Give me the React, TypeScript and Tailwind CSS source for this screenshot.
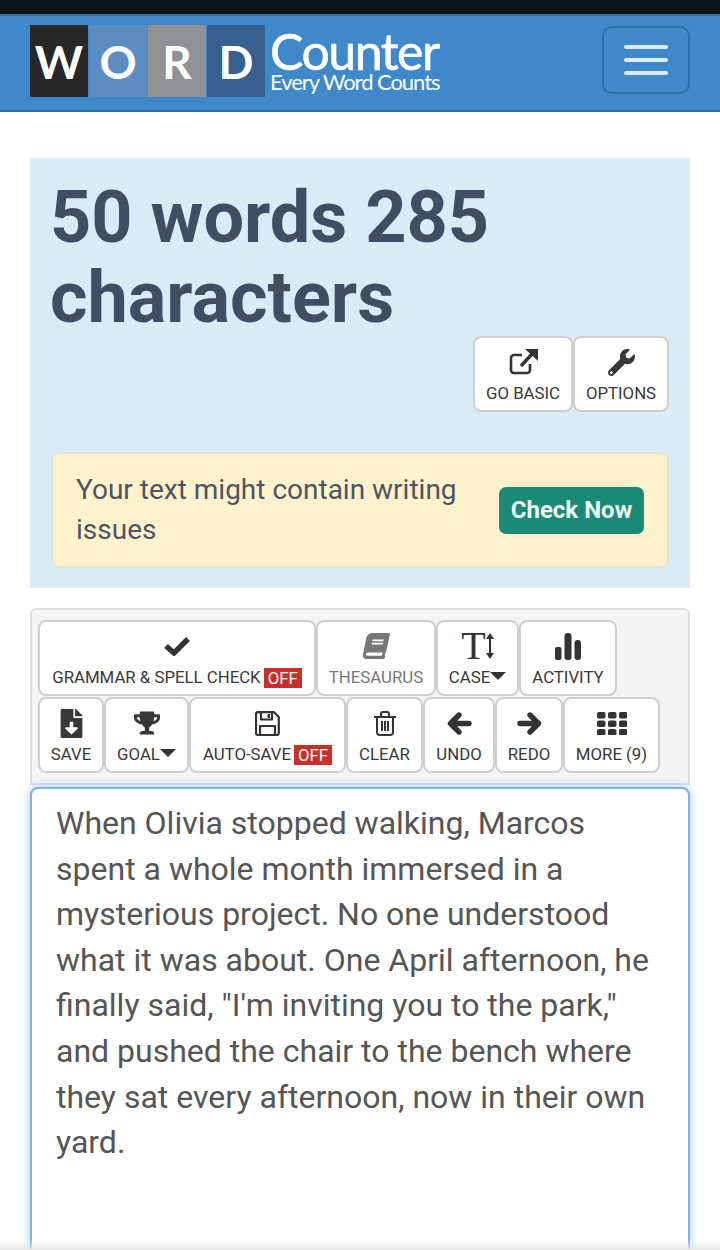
import React from "react";
import { FaBook, FaTrophy, FaWrench, FaFileDownload } from "react-icons/fa";

function Caret() {
  return <span className="inline-block w-0 h-0 border-x-[8px] border-x-transparent border-t-[8px] border-t-[#333] mb-[5px]" />;
}
function Off() {
  return <span className="ml-[3px] inline-block bg-[#c9302c] text-white px-[4px] h-[20px] leading-[20px]">OFF</span>;
}
function Btn({ w, icon, children, dim }: { w: string; icon: React.ReactNode; children: React.ReactNode; dim?: boolean }) {
  return (
    <div className={`${w} h-[76px] shrink-0 bg-white border-2 border-[#cfcfcf] rounded-[8px] flex flex-col items-center ${dim ? "text-[#777]" : "text-[#383838]"}`}>
      <div className="h-[40px] flex items-center justify-center pt-[8px]">{icon}</div>
      <div className="h-[30px] pt-[2px] flex items-center text-[16.8px] whitespace-nowrap">{children}</div>
    </div>
  );
}
function Tile({ bg, children }: { bg: string; children: string }) {
  return <div className={`${bg} w-[58px] h-[72px] flex items-center justify-center text-white text-[46px] font-bold font-['Lato',sans-serif]`}>{children}</div>;
}
const ExtLink = () => (
  <svg width="29" height="26" viewBox="0 0 29 26" fill="none" stroke="#333" strokeWidth="2.6">
    <path d="M21 15v6a3 3 0 0 1-3 3H5a3 3 0 0 1-3-3V9a3 3 0 0 1 3-3h8" />
    <path d="M12 17 L23 5" strokeWidth="3.4" />
    <path d="M16 0h13v12z" fill="#333" stroke="none" />
  </svg>
);
const Check = () => (
  <svg width="26" height="20" viewBox="0 0 26 20" fill="none" stroke="#333" strokeWidth="5.4"><path d="M2 10l8 7L24 3" /></svg>
);
const Arrow = ({ flip }: { flip?: boolean }) => (
  <svg width="25" height="23" viewBox="0 0 25 23" fill="none" stroke="#333" strokeWidth="5.4" strokeLinecap="round" strokeLinejoin="round" className={flip ? "-scale-x-100" : ""}>
    <path d="M12 3L3.5 11.5 12 20M4 11.5h18" />
  </svg>
);
const Grid = () => (
  <svg width="30" height="23" viewBox="0 0 30 23" fill="#333">
    {[0, 8.5, 17].map((y) => [0, 11, 22].map((x) => <rect key={`${x}-${y}`} x={x} y={y} width="8.5" height="6.5" rx="1.8" />))}
  </svg>
);
const Trash = () => (
  <svg width="22" height="25" viewBox="0 0 22 25" fill="none" stroke="#333" strokeWidth="2">
    <path d="M0 6h22M7 6V3a2 2 0 0 1 2-2h4a2 2 0 0 1 2 2v3M3 6v15a3 3 0 0 0 3 3h10a3 3 0 0 0 3-3V6M8 10v10M11 10v10M14 10v10" />
  </svg>
);
const Floppy = () => (
  <svg width="25" height="25" viewBox="0 0 25 25" fill="none" stroke="#333" strokeWidth="2.2" strokeLinejoin="round">
    <path d="M3 1.2h16l4.8 4.8v16a2 2 0 0 1-2 2H3a2 2 0 0 1-2-2V3a2 2 0 0 1 2-1.800z" />
    <path d="M6 1.500v7h11v-7M5 24v-9h15v9" />
    <rect x="12.500" y="3" width="2.500" height="4" fill="#333" stroke="none" />
  </svg>
);
const Bars = () => (
  <svg width="26" height="27" viewBox="0 0 26 27" fill="#333">
    <rect x="0" y="14" width="6.5" height="13" rx="2" /><rect x="9.5" y="0" width="7" height="27" rx="3" /><rect x="19.5" y="7" width="6.5" height="20" rx="3" />
  </svg>
);
const TextH = () => (
  <span className="flex items-center text-[#333]">
    <span className="font-['Liberation_Serif',serif] text-[40px] leading-none">T</span>
    <svg width="8" height="26" viewBox="0 0 8 26" fill="#333"><path d="M4 0l4 6H5v14h3l-4 6-4-6h3V6H0z" /></svg>
  </span>
);

export default function App() {
  return (
    <div className="relative w-[720px] h-[1250px] overflow-hidden bg-white font-['Roboto',sans-serif]">
      <div className="h-[14px] bg-[#0c131b]" />
      <header className="h-[98px] bg-[#3f89cb] border-y-2 border-t-[#3a6f9e] border-b-[#2f6a9c] flex items-start justify-between px-[30px] pt-[9px]">
        <div className="flex items-start gap-[1px]">
          <Tile bg="bg-[#272727]">W</Tile>
          <Tile bg="bg-[#5b8cc2]">O</Tile>
          <Tile bg="bg-[#8f9195]">R</Tile>
          <Tile bg="bg-[#35608f]">D</Tile>
          <div className="ml-[4px] mt-[6px] text-white font-['Lato',sans-serif] flex flex-col">
            <span className="text-[50px] leading-[40px] tracking-[-1.5px] h-[40px] [-webkit-text-stroke:0.6px_white]">Counter</span>
            <span className="text-[22px] leading-[22px] tracking-[-1.05px]">Every Word Counts</span>
          </div>
        </div>
        <div className="w-[88px] h-[68px] mt-[1px] border-2 border-[#2f6eaa] rounded-[10px] flex flex-col items-center justify-center gap-[9px]">
          <div className="w-[44px] h-[4px] rounded bg-[#dcecf7]" />
          <div className="w-[44px] h-[4px] rounded bg-[#dcecf7]" />
          <div className="w-[44px] h-[4px] rounded bg-[#dcecf7]" />
        </div>
      </header>

      <main className="px-[30px] pt-[46px]">
        <section className="h-[430px] bg-[#d9ebf5] px-[21px] pt-[20px]">
          <h1 className="text-[72px] leading-[80px] font-bold text-[#414d62] -ml-[1px]">50 words 285 characters</h1>
          <div className="flex justify-end mt-[-2px]">
            <Btn w="w-[100px]" icon={<ExtLink />}>GO BASIC</Btn>
            <Btn w="w-[96px]" icon={<FaWrench size={27} />}>OPTIONS</Btn>
          </div>
          <div className="mt-[40px] h-[116px] bg-[#fdf2cc] border-2 border-[#e3e3d8] rounded-[8px] px-[23px] flex items-center justify-between">
            <p className="w-[400px] text-[28px] leading-[40px] text-[#4b5563]">Your text might contain writing issues</p>
            <div className="w-[145px] h-[47px] rounded-[7px] bg-[#1a8a76] text-[#eefaf7] text-[24px] font-bold flex items-center justify-center">Check Now</div>
          </div>
        </section>

        <section className="mt-[20px] h-[177px] bg-[#f4f4f4] border-2 border-[#dfdfdf] rounded-t-[6px] px-[6px] pt-[10px]">
          <div className="flex">
            <Btn w="w-[278px]" icon={<Check />}>GRAMMAR &amp; SPELL CHECK<Off /></Btn>
            <Btn w="w-[120px]" dim icon={<FaBook size={26} className="-skew-x-12" />}>THESAURUS</Btn>
            <Btn w="w-[83px]" icon={<TextH />}><span>CASE</span><Caret /></Btn>
            <Btn w="w-[98px]" icon={<Bars />}>ACTIVITY</Btn>
          </div>
          <div className="flex mt-[1px]">
            <Btn w="w-[66px]" icon={<FaFileDownload size={29} />}>SAVE</Btn>
            <Btn w="w-[85px]" icon={<FaTrophy size={26} />}><span>GOAL</span><Caret /></Btn>
            <Btn w="w-[157px]" icon={<Floppy />}>AUTO-SAVE<Off /></Btn>
            <Btn w="w-[77px]" icon={<Trash />}>CLEAR</Btn>
            <Btn w="w-[72px]" icon={<Arrow />}>UNDO</Btn>
            <Btn w="w-[68px]" icon={<Arrow flip />}>REDO</Btn>
            <Btn w="w-[97px]" icon={<Grid />}>MORE (9)</Btn>
          </div>
        </section>

        <section className="relative mt-[2px] h-[520px] bg-white border-2 border-[#7fb2dc] rounded-[8px] shadow-[0_0_10px_rgba(100,170,230,0.6)] pl-[24px] pr-[36px] pt-[12px] text-[32px] leading-[45.6px] text-[#555]">
          When Olivia stopped walking, Marcos spent a whole month immersed in a mysterious project. No one understood what it was about. One April afternoon, he finally said, "I'm inviting you to the park," and pushed the chair to the bench where they sat every afternoon, now in their own yard.
        </section>
      </main>
      <div className="absolute left-0 right-0 bottom-0 h-[10px] bg-gradient-to-b from-transparent to-[#e6e6e6]" />
    </div>
  );
}
